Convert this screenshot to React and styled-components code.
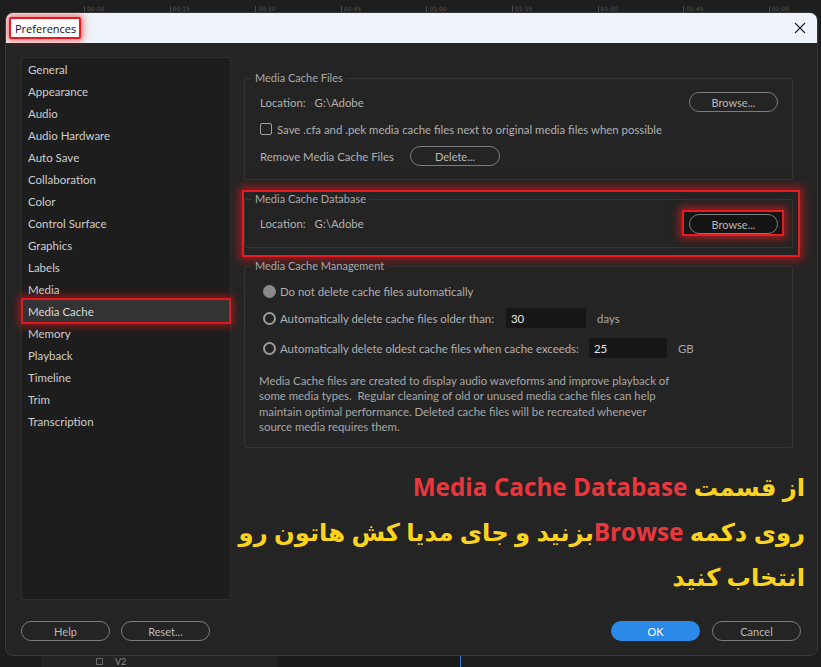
import React from "react";
import styled, { createGlobalStyle } from "styled-components";

const GlobalStyle = createGlobalStyle`
  html, body { margin: 0; padding: 0; background: #1d1d1d; }
  body { font-family: Lato, "Noto Sans", sans-serif; }
  * { box-sizing: border-box; }
`;

const Screen = styled.div`
  width: 821px;
  height: 667px;
  overflow: hidden;
  background: #1d1d1d;
  display: flex;
  flex-direction: column;
`;

const Ruler = styled.div`
  height: 12px;
  flex: none;
  display: flex;
  align-items: flex-end;
  padding-left: 84px;
  background: #1e1e1e;
`;

const Tick = styled.div`
  width: 85.6px;
  flex: none;
  height: 6px;
  border-left: 1px solid #4c4c4c;
  font-size: 6px;
  line-height: 6px;
  color: #555;
  padding-left: 2px;
  font-family: "DejaVu Sans", sans-serif;
`;

const Stage = styled.div`
  flex: none;
  height: 644px;
  display: flex;
  padding-left: 5px;
`;

const Dialog = styled.div`
  width: 813px;
  height: 644px;
  background: #242424;
  border: 1px solid #3a3a3a;
  border-radius: 8px;
  overflow: hidden;
  display: flex;
  flex-direction: column;
`;

const TitleBar = styled.div`
  height: 30px;
  flex: none;
  background: #eef3f9;
  display: flex;
  align-items: center;
  justify-content: space-between;
  padding: 0 11px 0 3px;
`;

const TitleLabel = styled.div`
  height: 22px;
  display: flex;
  align-items: center;
  padding: 0 3px 0 4px;
  border: 2px solid #e8191f;
  border-radius: 2px;
  box-shadow: 0 0 6px 2px rgba(240, 30, 30, 0.6);
  background: #fff;
  font-family: "Open Sans", sans-serif;
  font-size: 11px;
  color: #111;
`;

const Body = styled.div`
  flex: 1;
  display: grid;
  grid-template-columns: 210px 1fr;
  column-gap: 13px;
  padding: 15px 0 0 15px;
  min-height: 0;
`;

const Sidebar = styled.ul`
  margin: -1px 0 0 0;
  padding: 0;
  list-style: none;
  background: #1d1d1d;
  border: 1px solid #2e2e2e;
  height: 543px;
`;

const NavItem = styled.li`
  height: 22px;
  display: flex;
  align-items: center;
  padding-left: 5px;
  margin: 0 1px;
  font-size: 11.5px;
  color: ${(p) => (p.$active ? "#d8d8d8" : "#cdcdcd")};
  background: ${(p) => (p.$active ? "#333333" : "transparent")};
  ${(p) =>
    p.$active &&
    `outline: 2px solid #e3171d; box-shadow: 0 0 8px 4px rgba(235, 25, 25, 0.6);`}
`;

const Main = styled.div`
  display: flex;
  flex-direction: column;
  padding-right: 24px;
`;

const Group = styled.fieldset`
  margin: ${(p) => p.$mt || 0}px 0 0 0;
  padding: ${(p) => p.$pt}px 14px ${(p) => p.$pb}px 0;
  border: 1px solid #343434;
  border-radius: 2px;
  min-width: 0;
`;

const Legend = styled.legend`
  margin-left: 7px;
  padding: 0 3px;
  font-size: 11px;
  line-height: 14px;
  color: #a9a9a9;
`;

const Rows = styled.div`
  display: flex;
  flex-direction: column;
  gap: ${(p) => p.$gap || 7}px;
  padding-left: ${(p) => p.$pl || 15}px;
`;

const Row = styled.div`
  height: 20px;
  display: flex;
  align-items: center;
  font-size: 11.4px;
  color: #b0b0b0;
  margin-top: ${(p) => p.$mt || 0}px;
`;

const Value = styled.span`
  margin-left: 9px;
`;

const Spacer = styled.div`
  flex: 1;
`;

const PillButton = styled.button`
  width: ${(p) => p.$w || 89}px;
  height: 20px;
  flex: none;
  border-radius: 10px;
  border: ${(p) => (p.$primary ? "none" : "1.5px solid #7c7c7c")};
  background: ${(p) => (p.$primary ? "#2b8ae8" : "transparent")};
  color: ${(p) => (p.$primary ? "#ffffff" : "#b8b8b8")};
  font-family: Lato, sans-serif;
  font-size: 11px;
  padding: 0;
  margin-left: ${(p) => p.$ml || 0}px;
`;

const Highlight = styled.div`
  margin: 10px -7px 0 -2px;
  padding: 0 5px 7px 0;
  border: 2px solid #ec1a20;
  box-shadow: 0 0 9px 3px rgba(235, 25, 25, 0.6);
`;

const ButtonHighlight = styled.div`
  flex: none;
  margin-right: -6px;
  padding: 2px 4px 0 5px;
  border: 2px solid #ec1a20;
  background: #141414;
  box-shadow: 0 0 8px 3px rgba(235, 25, 25, 0.6);
`;

const Checkbox = styled.span`
  width: 12px;
  height: 12px;
  flex: none;
  border: 1.5px solid #a0a0a0;
  border-radius: 2px;
  margin-right: 5px;
`;

const Radio = styled.span`
  width: 13px;
  height: 13px;
  flex: none;
  border-radius: 50%;
  margin-right: 4px;
  ${(p) => (p.$checked ? "background: #8a8a8a;" : "border: 2px solid #9c9c9c;")}
`;

const NumberInput = styled.input`
  width: ${(p) => p.$w}px;
  height: 20px;
  margin-left: ${(p) => p.$ml}px;
  background: #161616;
  border: none;
  outline: none;
  color: #e6e6e6;
  font-family: Lato, sans-serif;
  font-size: 11.4px;
  padding: 0 0 0 5px;
`;

const Unit = styled.span`
  margin-left: 11px;
  color: #a8a8a8;
`;

const Description = styled.p`
  margin: 15px 0 0 0;
  font-size: 11.4px;
  line-height: 15.3px;
  color: #a7a7a7;
`;

const Note = styled.div`
  margin: 16px -12px 0 -30px;
  direction: rtl;
  text-align: right;
  font-family: "Open Sans", "DejaVu Sans", sans-serif;
  font-weight: 700;
  font-size: 24.3px;
  line-height: 45px;
  color: #fcd41e;
  white-space: nowrap;
`;

const Accent = styled.span`
  color: #ea373d;
`;

const Footer = styled.div`
  height: 55px;
  flex: none;
  display: flex;
  align-items: flex-start;
  padding: 21px 16px 0 15px;
`;

const BottomStrip = styled.div`
  flex: 1;
  display: flex;
  background: #1c1c1c;
`;

const StripCell = styled.div`
  width: ${(p) => p.$w}px;
  flex: none;
  background: ${(p) => p.$bg};
  border-right: ${(p) => p.$line || "none"};
  display: flex;
  align-items: center;
  padding-left: ${(p) => p.$pl || 0}px;
  gap: 12px;
  font-size: 9px;
  color: #8a8a8a;
`;

const TinyBox = styled.span`
  width: 7px;
  height: 7px;
  border: 1px solid #666;
`;

const navItems = [
  "General",
  "Appearance",
  "Audio",
  "Audio Hardware",
  "Auto Save",
  "Collaboration",
  "Color",
  "Control Surface",
  "Graphics",
  "Labels",
  "Media",
  "Media Cache",
  "Memory",
  "Playback",
  "Timeline",
  "Trim",
  "Transcription",
];

const tickLabels = ["00:00", "00:15", "00:30", "00:45", "01:00", "01:15", "01:30", "01:45", "02:00"];

function CloseIcon() {
  return (
    <svg width="12" height="12" viewBox="0 0 12 12">
      <path d="M1 1 L11 11 M11 1 L1 11" stroke="#1a1a1a" strokeWidth="1.1" fill="none" />
    </svg>
  );
}

export default function App() {
  return (
    <>
      <GlobalStyle />
      <Screen>
        <Ruler>
          {tickLabels.map((t) => (
            <Tick key={t}>{t}</Tick>
          ))}
        </Ruler>
        <Stage>
          <Dialog>
            <TitleBar>
              <TitleLabel>Preferences</TitleLabel>
              <CloseIcon />
            </TitleBar>
            <Body>
              <Sidebar>
                {navItems.map((n) => (
                  <NavItem key={n} $active={n === "Media Cache"}>
                    {n}
                  </NavItem>
                ))}
              </Sidebar>
              <Main>
                <Group $mt={13} $pt={7} $pb={13}>
                  <Legend>Media Cache Files</Legend>
                  <Rows>
                    <Row>
                      Location:<Value>G:\Adobe</Value>
                      <Spacer />
                      <PillButton>Browse...</PillButton>
                    </Row>
                    <Row>
                      <Checkbox />
                      Save .cfa and .pek media cache files next to original media files when possible
                    </Row>
                    <Row>
                      Remove Media Cache Files
                      <PillButton $w={90} $ml={16}>
                        Delete...
                      </PillButton>
                    </Row>
                  </Rows>
                </Group>

                <Highlight>
                  <Group $pt={7} $pb={14}>
                    <Legend>Media Cache Database</Legend>
                    <Rows>
                      <Row>
                        Location:<Value>G:\Adobe</Value>
                        <Spacer />
                        <ButtonHighlight>
                          <PillButton>Browse...</PillButton>
                        </ButtonHighlight>
                      </Row>
                    </Rows>
                  </Group>
                </Highlight>

                <Group $mt={2} $pt={8} $pb={13}>
                  <Legend>Media Cache Management</Legend>
                  <Rows $gap={7} $pl={18}>
                    <Row>
                      <Radio $checked />
                      Do not delete cache files automatically
                    </Row>
                    <Row>
                      <Radio />
                      Automatically delete cache files older than:
                      <NumberInput $w={80} $ml={12} defaultValue="30" readOnly />
                      <Unit>days</Unit>
                    </Row>
                    <Row $mt={3}>
                      <Radio />
                      Automatically delete oldest cache files when cache exceeds:
                      <NumberInput $w={78} $ml={10} defaultValue="25" readOnly />
                      <Unit>GB</Unit>
                    </Row>
                  </Rows>
                  <Rows $pl={14}>
                    <Description>
                      Media Cache files are created to display audio waveforms and improve playback of
                      <br />
                      some media types.&nbsp; Regular cleaning of old or unused media cache files can help
                      <br />
                      maintain optimal performance. Deleted cache files will be recreated whenever
                      <br />
                      source media requires them.
                    </Description>
                  </Rows>
                </Group>

                <Note>
                  <div>
                    از قسمت <Accent>Media Cache Database</Accent>
                  </div>
                  <div>
                    روی دکمه <Accent>Browse</Accent>بزنید و جای مدیا کش هاتون رو
                  </div>
                  <div>انتخاب کنید</div>
                </Note>
              </Main>
            </Body>
            <Footer>
              <PillButton>Help</PillButton>
              <PillButton $ml={11}>Reset...</PillButton>
              <Spacer />
              <PillButton $primary>OK</PillButton>
              <PillButton $ml={12}>Cancel</PillButton>
            </Footer>
          </Dialog>
        </Stage>
        <BottomStrip>
          <StripCell $w={41} $bg="#1c1c1c" />
          <StripCell $w={236} $bg="#232323" $pl={55}>
            <TinyBox />
            V2
          </StripCell>
          <StripCell $w={184} $bg="#1b1b1b" $line="1px solid #2f7fd6" />
          <StripCell $w={360} $bg="#1e1e1e" />
        </BottomStrip>
      </Screen>
    </>
  );
}
